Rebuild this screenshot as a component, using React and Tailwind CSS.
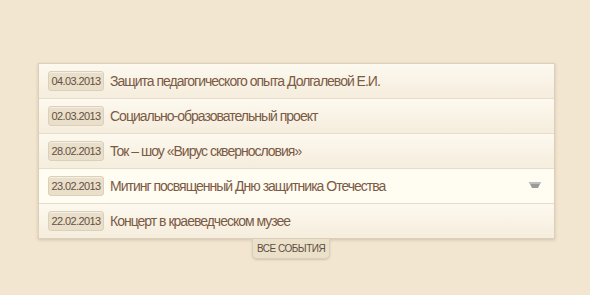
const events = [
  { date: "04.03.2013", title: "Защита педагогического опыта Долгалевой Е.И." },
  { date: "02.03.2013", title: "Социально-образовательный проект" },
  { date: "28.02.2013", title: "Ток – шоу «Вирус сквернословия»" },
  { date: "23.02.2013", title: "Митинг посвященный Дню защитника Отечества", open: true },
  { date: "22.02.2013", title: "Концерт в краеведческом музее" },
];

export default function App() {
  return (
    <div className="min-h-[295px] w-[590px] bg-[#f2e6d1] pt-[63px] font-['Liberation_Sans',Arial,sans-serif]">
      <div className="ml-[38px] w-[517px] border border-[#ddd0bb] bg-[#fbf6ea] shadow-[0_1px_3px_rgba(120,90,50,0.25)]">
        {events.map((e, i) => (
          <div
            key={e.date}
            className={`flex items-center pl-[9px] pr-[13px] ${
              i > 0 ? "h-[35px] border-t border-[#e6dccb]" : "h-[34px]"
            } ${
              e.open
                ? "bg-[#fffcf1]"
                : "bg-gradient-to-b from-[#fdf9ef] to-[#f5eddd]"
            }`}
          >
            <span className="flex h-[20px] w-[56px] items-center justify-center rounded-[3px] border border-[#ddd0b8] bg-[#e9dfca] text-[11px] tracking-[-0.6px] text-[#65503f] shadow-[inset_0_1px_0_rgba(255,255,255,0.5)]">
              {e.date}
            </span>
            <span className="ml-[6px] flex-1 text-[14px] tracking-[-1px] text-[#7b5a45]">
              {e.title}
            </span>
            {e.open && (
              <svg width="12" height="8" viewBox="0 0 12 8" className="-mt-[3px]">
                <path d="M0 1 L12 1 L9 7 L3 7 Z" fill="#9a9a9a" />
                <path d="M0 1 L12 1 L11 3 L1 3 Z" fill="#bdbdbd" />
              </svg>
            )}
          </div>
        ))}
      </div>
      <div className="flex pl-[252px]">
        <span className="flex h-[20px] items-center rounded-b-[5px] border border-t-0 border-[#ddd0b8] bg-[#ebe0ca] px-[4px] text-[10px] tracking-[-0.5px] text-[#5e4e40] shadow-[0_1px_2px_rgba(120,90,50,0.25)]">
          ВСЕ СОБЫТИЯ
        </span>
      </div>
    </div>
  );
}
